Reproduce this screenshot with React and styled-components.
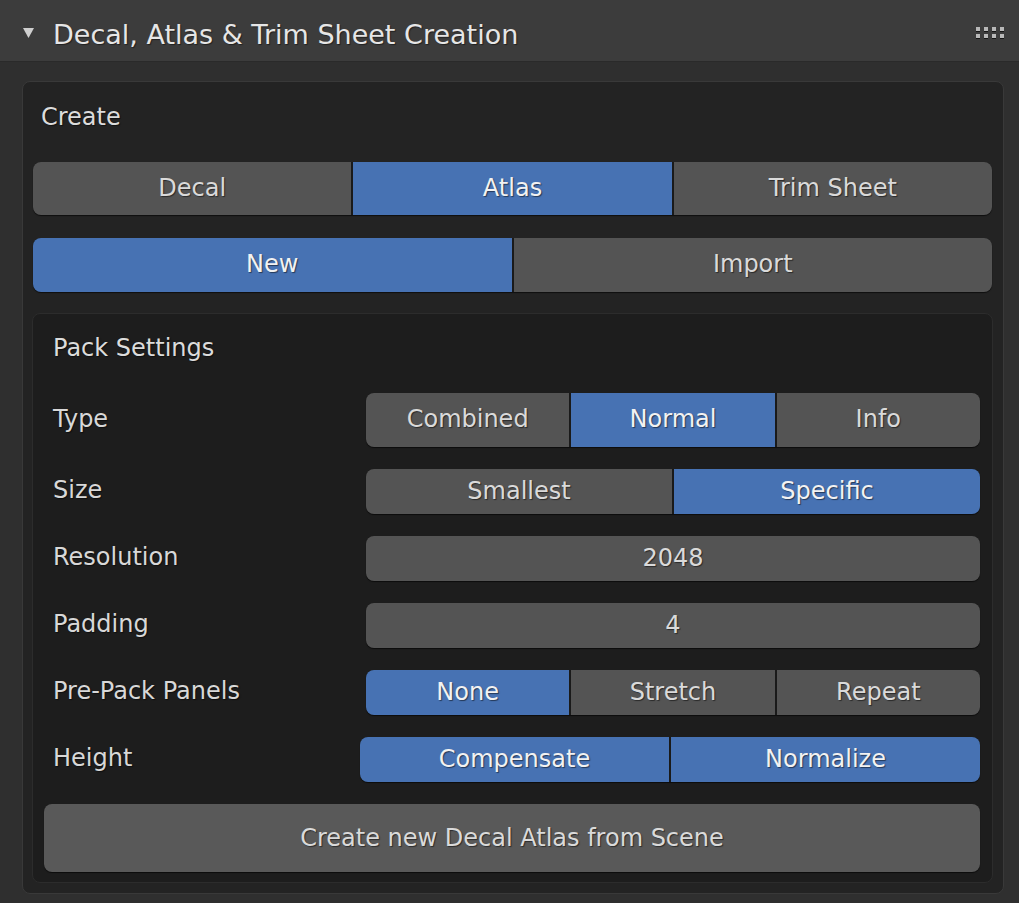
import styled, { createGlobalStyle } from "styled-components";

const GlobalStyle = createGlobalStyle`
    html, body {
        margin : 0;
        padding : 0;
        background : #2f2f2f;
    }
    body {
        font-family : "DejaVu Sans", "Liberation Sans", sans-serif;
        color : #e2e2e2;
    }
`

const Panel = styled.div`
    width : 1019px;
    height : 903px;
    background : #2f2f2f;
    overflow : hidden;
`
const Header = styled.div`
    height : 62px;
    box-sizing : border-box;
    background : #3c3c3c;
    border-bottom : 1px solid #2a2a2a;
    display : flex;
    align-items : center;
    padding : 4px 15px 0 23px;
`
const Title = styled.div`
    flex : 1;
    margin-left : 19px;
    padding-top : 4px;
    font-size : 27px;
    color : #e6e6e6;
    text-shadow : 1px 1px 1px rgba(0,0,0,0.45);
`
const Grip = styled.div`
    display : grid;
    grid-template-columns : repeat(4, 4px);
    grid-gap : 3px 4px;
    span {
        width : 4px;
        height : 4px;
        background : #b8b8b8;
        box-shadow : 0 1px 0 #151515;
    }
`
const Body = styled.div`
    padding : 19px 15px 0 22px;
`
const Box = styled.div`
    background : ${props => props.$inner ? "#1d1d1d" : "#232323"};
    border : 1px solid ${props => props.$inner ? "#2c2c2c" : "#393939"};
    border-radius : 8px;
    padding : ${props => props.$inner ? "0 12px 10px 11px" : "0 11px 10px 10px"};
    margin : ${props => props.$inner ? "0 -1px" : "0"};
`
const BoxLabel = styled.div`
    font-size : 24px;
    line-height : 24px;
    padding : ${props => props.$inner ? "22px 0 0 9px" : "23px 0 0 8px"};
    margin-bottom : 33px;
    color : #dcdcdc;
    text-shadow : 1px 1px 1px rgba(0,0,0,0.5);
`
const Segmented = styled.div`
    display : flex;
    gap : 2px;
    height : ${props => props.$h || 45}px;
    border-radius : 8px;
    overflow : hidden;
    background : #1a1a1a;
    box-shadow : 0 1px 1px rgba(0,0,0,0.6);
    margin-bottom : ${props => props.$mb || 0}px;
    flex : 1;
    margin-left : ${props => props.$shift || 0}px;
`
const Seg = styled.div`
    flex : 1;
    display : flex;
    align-items : center;
    justify-content : center;
    font-size : 24px;
    background : ${props => props.$on ? "#4772b3" : "#545454"};
    color : ${props => props.$on ? "#f2f2f2" : "#dadada"};
    text-shadow : 1px 1px 1px rgba(0,0,0,0.5);
    padding-bottom : 2px;
    cursor : pointer;
`
const Row = styled.div`
    display : flex;
    align-items : center;
    margin-bottom : 22px;
`
const RowLabel = styled.div`
    width : 322px;
    padding-left : 9px;
    box-sizing : border-box;
    font-size : 24px;
    color : #d8d8d8;
    text-shadow : 1px 1px 1px rgba(0,0,0,0.5);
    padding-bottom : 3px;
`
const BigButton = styled.div`
    height : 68px;
    border-radius : 8px;
    background : #595959;
    box-shadow : 0 1px 1px rgba(0,0,0,0.6);
    display : flex;
    align-items : center;
    justify-content : center;
    font-size : 24px;
    color : #dadada;
    text-shadow : 1px 1px 1px rgba(0,0,0,0.5);
    cursor : pointer;
`

const rows = [
    { label : "Type", h : 54, items : [["Combined"], ["Normal", true], ["Info"]] },
    { label : "Size", items : [["Smallest"], ["Specific", true]] },
    { label : "Resolution", items : [["2048"]] },
    { label : "Padding", items : [["4"]] },
    { label : "Pre-Pack Panels", items : [["None", true], ["Stretch"], ["Repeat"]] },
    { label : "Height", shift : -6, items : [["Compensate", true], ["Normalize", true]] },
];

function App(){
    return (
        <>
            <GlobalStyle />
            <Panel>
                <Header>
                    <svg width="11" height="10" viewBox="0 0 11 10">
                        <polygon points="0,0 11,0 5.5,10" fill="#cfcfcf" />
                    </svg>
                    <Title>Decal, Atlas &amp; Trim Sheet Creation</Title>
                    <Grip>
                        {Array.from({length : 8}).map((_, i) => <span key={i} />)}
                    </Grip>
                </Header>
                <Body>
                    <Box>
                        <BoxLabel>Create</BoxLabel>
                        <Segmented $h={53} $mb={23}>
                            <Seg>Decal</Seg>
                            <Seg $on>Atlas</Seg>
                            <Seg>Trim Sheet</Seg>
                        </Segmented>
                        <Segmented $h={54} $mb={21}>
                            <Seg $on>New</Seg>
                            <Seg>Import</Seg>
                        </Segmented>
                        <Box $inner>
                            <BoxLabel $inner>Pack Settings</BoxLabel>
                            {rows.map(r => (
                                <Row key={r.label}>
                                    <RowLabel>{r.label}</RowLabel>
                                    <Segmented $h={r.h} $shift={r.shift}>
                                        {r.items.map(([t, on]) => <Seg key={t} $on={on}>{t}</Seg>)}
                                    </Segmented>
                                </Row>
                            ))}
                            <BigButton>Create new Decal Atlas from Scene</BigButton>
                        </Box>
                    </Box>
                </Body>
            </Panel>
        </>
    )
}
export default App;
